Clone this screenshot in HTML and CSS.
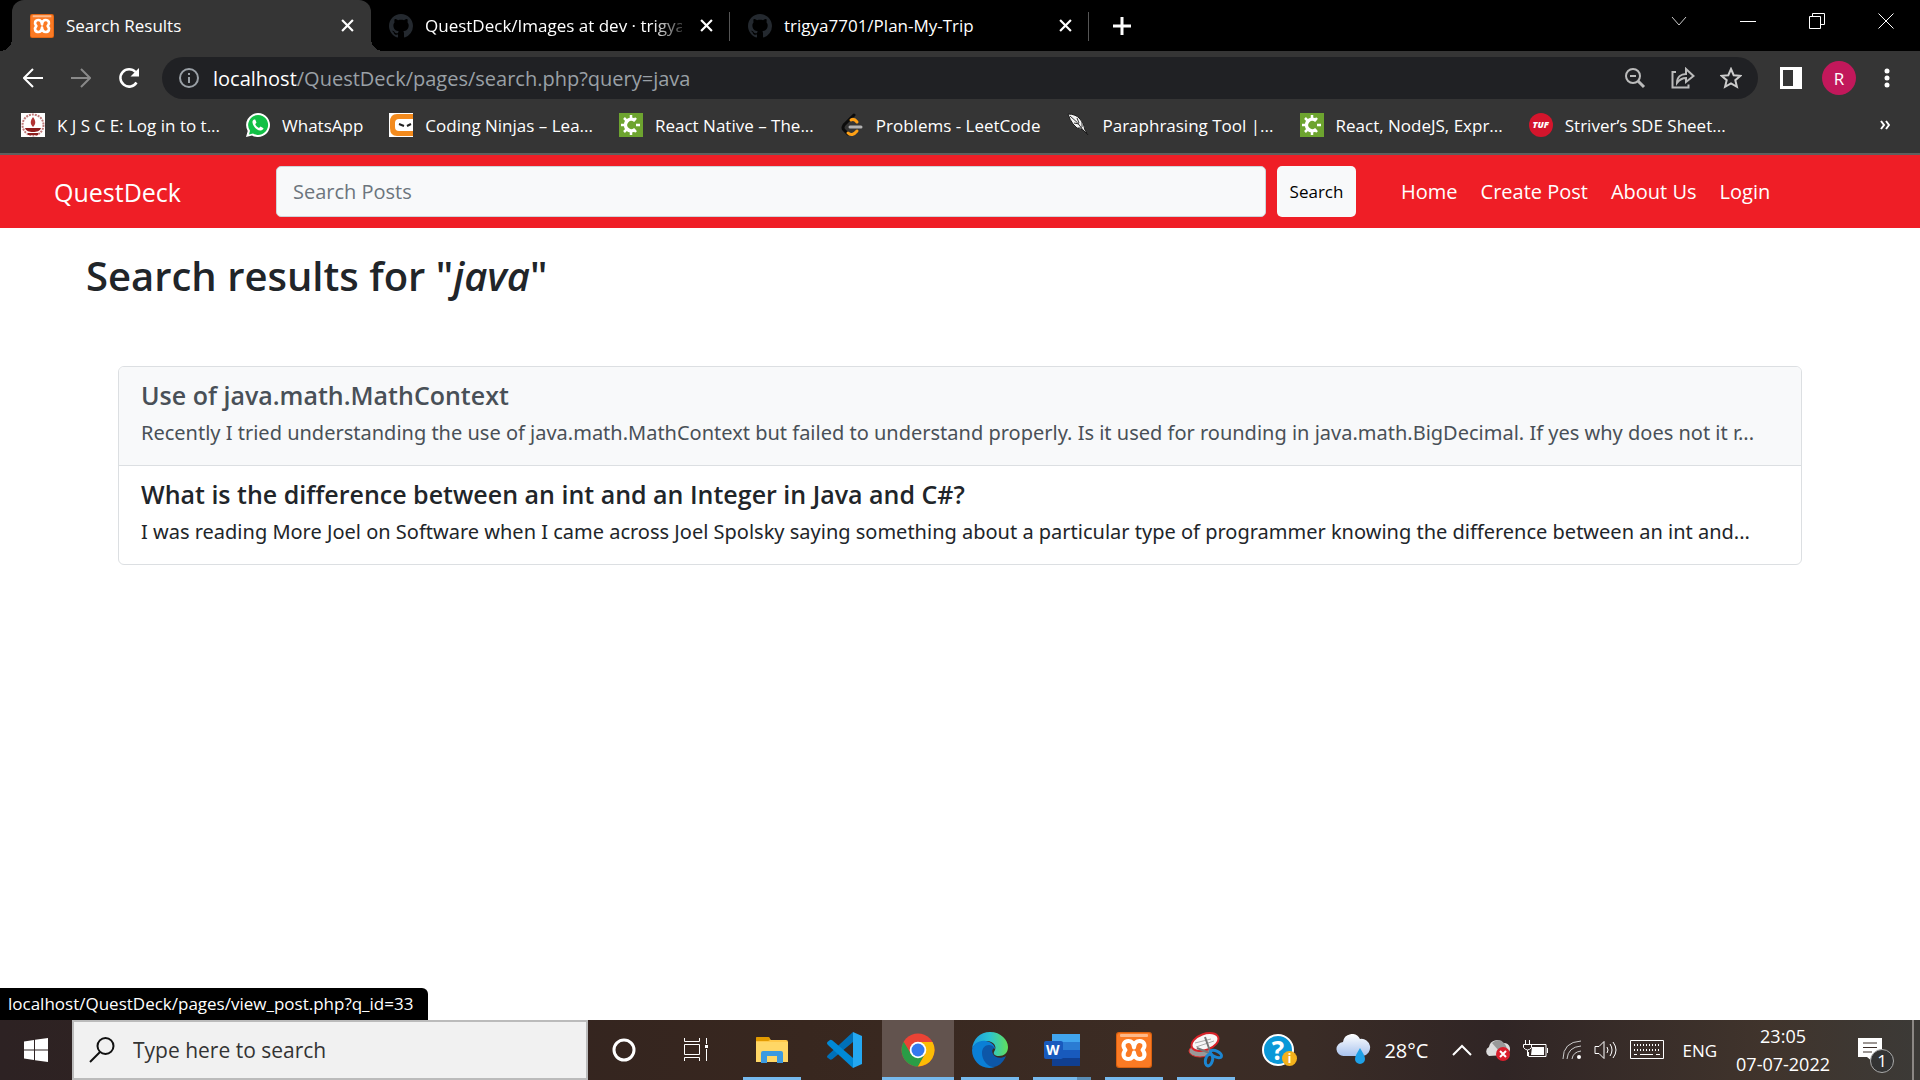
FILE: index.html
```html
<!DOCTYPE html>
<html lang="en">
<head>
<meta charset="utf-8">
<title>Search Results</title>
<link rel="stylesheet" href="styles.css">
</head>
<body>
<svg class="sprite" aria-hidden="true">
  <symbol id="xampp" viewBox="0 0 36 36">
    <rect width="36" height="36" rx="3" fill="#d9600f"/>
    <rect x="1" y="1" width="34" height="34" rx="3" fill="#fb7a24"/>
    <rect x="4" y="2" width="28" height="3" rx="1" fill="#fdb98a"/>
    <path d="M18 15.500C17.500 11 16 9 12.500 9C8 9 5.500 13.500 9.500 18C5.500 22.500 8 27 12.500 27C16 27 17.500 25 18 20.500C18.500 25 20 27 23.500 27C28 27 30.500 22.500 26.500 18C30.500 13.500 28 9 23.500 9C20 9 18.500 11 18 15.500z" fill="none" stroke="#fff" stroke-width="4" stroke-linejoin="round"/>
  </symbol>
  <symbol id="github" viewBox="0 0 16 16">
    <path fill="#24292f" d="M8 0C3.580 0 0 3.580 0 8c0 3.540 2.290 6.530 5.470 7.590.4.070.55-.17.55-.38 0-.19-.01-.82-.01-1.490-2.010.37-2.530-.49-2.690-.94-.09-.23-.48-.94-.82-1.130-.28-.15-.68-.52-.01-.53.63-.01 1.080.58 1.230.82.72 1.210 1.870.87 2.330.66.07-.52.28-.87.51-1.070-1.780-.2-3.640-.89-3.640-3.950 0-.87.31-1.590.82-2.150-.08-.2-.36-1.020.08-2.120 0 0 .67-.21 2.200.82.64-.18 1.320-.27 2-.27s1.360.09 2 .27c1.530-1.040 2.200-.82 2.200-.82.44 1.100.16 1.920.08 2.120.51.56.82 1.270.82 2.150 0 3.070-1.870 3.750-3.650 3.950.29.25.54.73.54 1.480 0 1.070-.01 1.930-.01 2.200 0 .21.15.46.55.38A8.010 8.010 0 0 0 16 8c0-4.420-3.580-8-8-8z"/>
  </symbol>
  <symbol id="gear-c" viewBox="0 0 24 24">
    <rect width="24" height="24" fill="#6da42f"/>
    <path d="M16 7.500A5.800 5.800 0 1 0 16 16.500" fill="none" stroke="#fff" stroke-width="3.500"/>
    <path d="M12 2v4M12 18v4M2 12h4M5 5l3 3M5 19l3-3M17 5l-2.500 3M17 19l-2.500-3M17 12h4" stroke="#fff" stroke-width="2.500"/>
  </symbol>
  <symbol id="close" viewBox="0 0 12 12">
    <path d="M1 1l10 10M11 1L1 11" stroke="#fff" stroke-width="2"/>
  </symbol>
</svg>

<header class="browser">
  <div class="tab-strip">
    <div class="tab tab-active">
      <svg class="favicon"><use href="#xampp"/></svg>
      <span class="tab-title">Search Results</span>
      <button class="tab-close" aria-label="Close tab"><svg width="13" height="13"><use href="#close"/></svg></button>
    </div>
    <div class="tab">
      <svg class="favicon"><use href="#github"/></svg>
      <span class="tab-title tab-fade">QuestDeck/Images at dev · trigya</span>
      <button class="tab-close" aria-label="Close tab"><svg width="13" height="13"><use href="#close"/></svg></button>
    </div>
    <div class="tab">
      <svg class="favicon"><use href="#github"/></svg>
      <span class="tab-title">trigya7701/Plan-My-Trip</span>
      <button class="tab-close" aria-label="Close tab"><svg width="13" height="13"><use href="#close"/></svg></button>
    </div>
    <button class="new-tab" aria-label="New tab"><svg width="18" height="18"><path d="M9 0v18M0 9h18" stroke="#fff" stroke-width="3"/></svg></button>
    <div class="window-buttons">
      <button aria-label="Search tabs"><svg width="16" height="10"><path d="M1 1l7 8l7-8" fill="none" stroke="#ccc"/></svg></button>
      <button aria-label="Minimize"><svg width="16" height="16"><path d="M0 8.500h16" stroke="#fff"/></svg></button>
      <button aria-label="Restore"><svg width="16" height="16"><path d="M.5 3.500h11v12h-11zM3.500 3.500v-3h12v11h-4" fill="none" stroke="#fff"/></svg></button>
      <button aria-label="Close"><svg width="16" height="16"><path d="M.5.5l15 15M15.500.5l-15 15" stroke="#fff"/></svg></button>
    </div>
  </div>

  <div class="toolbar">
    <button class="tool" aria-label="Back"><svg width="20" height="20"><path d="M20 10H2M10 1l-9 9l9 9" fill="none" stroke="#fff" stroke-width="2"/></svg></button>
    <button class="tool" aria-label="Forward"><svg width="20" height="20"><path d="M0 10h18M10 1l9 9l-9 9" fill="none" stroke="#898989" stroke-width="2"/></svg></button>
    <button class="tool" aria-label="Reload"><svg width="22" height="22"><path d="M18.500 15.500A8.700 8.700 0 1 1 17.500 5" fill="none" stroke="#fff" stroke-width="2.500"/><path d="M21 1v8.500h-8.500z" fill="#fff"/></svg></button>
    <div class="omnibox">
      <svg width="22" height="22"><circle cx="11" cy="11" r="9" fill="none" stroke="#9aa0a6" stroke-width="2"/><path d="M11 10v6M11 6v2" stroke="#9aa0a6" stroke-width="2"/></svg>
      <span class="url"><b>localhost</b>/QuestDeck/pages/search.php?query=java</span>
      <button class="tool" aria-label="Zoom"><svg width="22" height="22"><circle cx="9" cy="9" r="7" fill="none" stroke="#bbb" stroke-width="2"/><path d="M14 14l6 6" stroke="#bbb" stroke-width="3"/><path d="M6 9h6" stroke="#bbb" stroke-width="2"/></svg></button>
      <button class="tool" aria-label="Share"><svg width="24" height="22"><path d="M5 5H1.500v15.500h16v-3" fill="none" stroke="#bbb" stroke-width="2"/><path d="M6 16c0-6 4-9 9-9V2l7.500 7l-7.500 6v-4c-4 0-6 1-9 5z" fill="none" stroke="#bbb" stroke-width="2"/></svg></button>
      <button class="tool" aria-label="Bookmark"><svg width="22" height="22"><path d="M11 2l2.700 6.200l6.800.6l-5.200 4.400l1.600 6.600L11 16.300l-5.900 3.500l1.600-6.600L1.500 8.800l6.800-.6z" fill="none" stroke="#ccc" stroke-width="2"/></svg></button>
    </div>
    <div class="toolbar-end">
      <button class="tool" aria-label="Side panel"><svg width="22" height="22"><path d="M1.500 1.500h19v19h-19z" fill="none" stroke="#fff" stroke-width="3"/><path d="M13 0h9v22h-9z" fill="#fff"/></svg></button>
      <button class="avatar">R</button>
      <button class="tool" aria-label="Menu"><svg width="6" height="20" fill="#fff"><circle cx="3" cy="3" r="2.500"/><circle cx="3" cy="10" r="2.500"/><circle cx="3" cy="17" r="2.500"/></svg></button>
    </div>
  </div>

  <nav class="bookmarks" aria-label="Bookmarks">
    <a href="#"><svg viewBox="0 0 24 24"><path fill="#fff" d="M0 0h24v24H0z"/><circle cx="12" cy="12" r="10.500" fill="none" stroke="#c07b7b" stroke-width="2" stroke-dasharray="2 1"/><path d="M4 15h16c-1 3-4 4-8 4s-7-1-8-4z" fill="#8c1c1c"/><path d="M12 4c3 4 3 7 0 10c-3-3-3-6 0-10z" fill="#b23434"/><path d="M7 21h10" stroke="#8c1c1c" stroke-width="2"/></svg><span>K J S C E: Log in to t...</span></a>
    <a href="#"><svg viewBox="0 0 24 24"><path d="M12 0a12 12 0 1 1-6 22.400L0 24l1.700-6A12 12 0 0 1 12 0z" fill="#fff"/><path d="M12 2a10 10 0 1 1-5 18.600L3 21.500l1-3.800A10 10 0 0 1 12 2z" fill="#12c046"/><path d="M8 6.500c-1 .5-1.700 1.700-1.500 3C7 13.500 10.500 17 14.500 17.500c1.400.1 2.700-.8 3-2.200l-3-1.700l-1.500 1.500c-1.700-.8-3-2-3.800-3.800L10.500 9.500L9.200 6.500z" fill="#fff"/></svg><span>WhatsApp</span></a>
    <a href="#"><svg viewBox="0 0 24 24"><path fill="#fff" d="M0 0h24v24H0z"/><path d="M24 1H8Q1 1 1 9v6q0 8 7 8h16v-5H10Q6 18 6 14V10Q6 6 10 6h14z" fill="#f28a1d"/><path d="M10 11l5 2M22 11l-4 2" stroke="#222" stroke-width="2"/></svg><span>Coding Ninjas – Lea...</span></a>
    <a href="#"><svg><use href="#gear-c"/></svg><span>React Native – The...</span></a>
    <a href="#"><svg viewBox="0 0 24 24" fill="none" stroke-linecap="round" stroke-width="3"><path d="M14 2L4 12q-2 3 0 5l4 4" stroke="#0b0b0b"/><path d="M11 7q3-2 6 2M8 20q4 4 9-2" stroke="#ffa116"/><path d="M10 14h11" stroke="#b3b3b3"/></svg><span>Problems - LeetCode</span></a>
    <a href="#"><svg viewBox="0 0 24 24"><path d="M2 1q8 0 12 5q4 4 5 11l3 5l-5-5q-7-1-10-6q-3-4-5-10z" fill="#f4f4f4" stroke="#1c1c1c"/><path d="M4 3q8 6 13 14M8 10l5 1M11 5l2 5M12 15l4 0M16 9v5" stroke="#333" fill="none"/></svg><span>Paraphrasing Tool |...</span></a>
    <a href="#"><svg><use href="#gear-c"/></svg><span>React, NodeJS, Expr...</span></a>
    <a href="#"><span class="tuf">TUF</span><span>Striver’s SDE Sheet...</span></a>
    <button class="more" aria-label="More bookmarks"><svg width="10" height="10"><path d="M1 1l3 4l-3 4M6 1l3 4l-3 4" fill="none" stroke="#fff" stroke-width="2"/></svg></button>
  </nav>
</header>

<div class="page">
  <nav class="site-nav">
    <a class="brand" href="#">QuestDeck</a>
    <form class="site-search">
      <input type="search" placeholder="Search Posts" aria-label="Search Posts">
      <button type="button">Search</button>
    </form>
    <div class="site-links">
      <a href="#">Home</a><a href="#">Create Post</a><a href="#">About Us</a><a href="#">Login</a>
    </div>
  </nav>
  <main>
    <h1>Search results for "<em>java</em>"</h1>
    <div class="results">
      <a class="result result-hover" href="#">
        <h2>Use of java.math.MathContext</h2>
        <p>Recently I tried understanding the use of java.math.MathContext but failed to understand properly. Is it used for rounding in java.math.BigDecimal. If yes why does not it r...</p>
      </a>
      <a class="result" href="#">
        <h2>What is the difference between an int and an Integer in Java and C#?</h2>
        <p>I was reading More Joel on Software when I came across Joel Spolsky saying something about a particular type of programmer knowing the difference between an int and...</p>
      </a>
    </div>
  </main>
  <div class="status">localhost/QuestDeck/pages/view_post.php?q_id=33</div>
</div>

<footer class="taskbar">
  <button class="start" aria-label="Start"><svg width="24" height="24" fill="#fff"><path d="M0 3.500l10-1.500v9.500H0zM11 1.800L24 0v11.500H11zM0 12.500h10V22L0 20.500zM11 12.500h13V24l-13-1.800z"/></svg></button>
  <label class="task-search">
    <svg width="26" height="26"><circle cx="16.500" cy="9" r="8" fill="none" stroke="#111" stroke-width="2"/><path d="M11 15L1 25" stroke="#111" stroke-width="2"/></svg>
    <input type="text" placeholder="Type here to search">
  </label>
  <div class="task-apps">
    <button aria-label="Cortana"><svg width="24" height="24"><circle cx="12" cy="12" r="10" fill="none" stroke="#fff" stroke-width="3"/></svg></button>
    <button aria-label="Task view"><svg width="24" height="24" fill="none" stroke="#fff"><path d="M.5 6.500h15v10H.5zM.5 0v3.500h15V0M.5 23v-3.500h15V23M22.500 0v6M22.500 11v12"/><path d="M21 7h3v3h-3z" fill="#fff" stroke="none"/></svg></button>
    <button class="running spaced" aria-label="File Explorer"><svg width="32" height="28"><path d="M0 3q0-2 2-2h10l3 3h15q2 0 2 2v19H0z" fill="#ffc94a"/><path d="M0 2q0-1 1-1h11q2 0 2 2t-2 2H0z" fill="#e29a00"/><path d="M0 6h32v20H0z" fill="#ffd766"/><path d="M5 27V17q0-2 2-2h18q2 0 2 2v10h-6v-7H11v7z" fill="#3b9ae1"/></svg></button>
    <button aria-label="Visual Studio Code"><svg width="36" height="36"><path d="M27 0L2 23q-2 2 0 3l2 1.500q1 .5 2.500-.5L27 10z" fill="#0070b8"/><path d="M27 36L2 13q-2-2 0-3.500L4 8q1-.5 2.500.5L27 26z" fill="#0089d6"/><path d="M27 0l9 4v28l-9 4z" fill="#24a8f2"/></svg></button>
    <button class="running current" aria-label="Google Chrome"><svg width="34" height="34" viewBox="0 0 34 34"><circle cx="17" cy="17" r="16.500" fill="#ea4335"/><path d="M2.700 8.800A16.500 16.500 0 0 0 17 33.500L24 21L10 21z" fill="#2a9d46"/><path d="M17 9h14.500A16.500 16.500 0 0 1 17 33.500L24 21z" fill="#fbbc05"/><circle cx="17" cy="17" r="8.300" fill="#fff"/><circle cx="17" cy="17" r="6.500" fill="#3478ee"/></svg></button>
    <button class="running" aria-label="Microsoft Edge"><svg width="36" height="36" viewBox="0 0 36 36"><defs><linearGradient id="edge-top"><stop stop-color="#1a9be0"/><stop offset=".5" stop-color="#2cc3d0"/><stop offset="1" stop-color="#62e05a"/></linearGradient></defs><path d="M0 17C1 7 8 0 18 0c11 0 18 8 18 15c0 6-4 9-9 9c-4 0-6-2-5-4c4-6-1-11-7-11C8 9 2 12 0 17z" fill="url(#edge-top)"/><path d="M0 18C1 12 7 8 14 9c6 1 9 5 9 8c-5-5-12-1-11 6c1 6 6 11 11 12C11 39 0 30 0 18z" fill="#0a7fd6"/><path d="M10 21c0-5 3-8 7-8q4 0 5 3q-3 2-1 6c2 4 8 5 13 2c-3 7-8 11-13 11C15 34 10 28 10 21z" fill="#0d57a8"/></svg></button>
    <button class="running grouped" aria-label="Word"><span class="word"><svg width="36" height="32"><path d="M8 0h28v8H8z" fill="#41a5ee"/><path d="M8 8h28v8H8z" fill="#2b7cd3"/><path d="M8 16h28v8H8z" fill="#185abd"/><path d="M8 24h28v8H8z" fill="#103f91"/><rect y="7" width="19" height="18" rx="2" fill="#185abd"/></svg><b>W</b></span></button>
    <button class="running" aria-label="XAMPP"><svg width="36" height="36"><use href="#xampp"/></svg></button>
    <button class="running" aria-label="Snipping Tool"><svg width="36" height="36"><ellipse cx="12" cy="19" rx="11" ry="6" fill="#999" stroke="#d33"/><ellipse cx="17" cy="10" rx="14" ry="8" transform="rotate(-20 17 10)" fill="#f7f7f7" stroke="#d8232a" stroke-width="2"/><path d="M7 11l16-4M8 15l18-6" stroke="#aaa"/><path d="M17 5l6 17M9 16l15 6" stroke="#777" stroke-width="2"/><g fill="none" stroke="#1c86d1" stroke-width="3"><ellipse cx="28" cy="22" rx="6" ry="3" transform="rotate(25 28 22)"/><ellipse cx="21" cy="28" rx="3.500" ry="6" transform="rotate(15 21 28)"/></g></svg></button>
    <button aria-label="Help"><span class="help"><b>?</b><i>i</i></span></button>
  </div>
  <button class="weather"><svg width="36" height="32"><defs><linearGradient id="cloud" x2="0" y2="1"><stop stop-color="#fff"/><stop offset="1" stop-color="#a9c3ee"/></linearGradient></defs><path d="M8 22a7 7 0 0 1-1-14A9 9 0 0 1 24 5a8.500 8.500 0 0 1 3 17z" fill="url(#cloud)"/><path d="M24 14c3 5 5 8 5 11a5 5 0 0 1-10 0c0-3 2-6 5-11z" fill="#1ea1e8"/></svg>28°C</button>
  <div class="tray">
    <button aria-label="Show hidden icons"><svg width="20" height="12"><path d="M1 11l9-9l9 9" fill="none" stroke="#fff" stroke-width="2"/></svg></button>
    <button aria-label="OneDrive"><svg width="26" height="22"><path d="M4 17a5 5 0 0 1 0-9A8 8 0 0 1 18 4a6 6 0 0 1 2 12z" fill="#ddd"/><path d="M7 4Q14-2 19 4q3 3 3 8H14z" fill="#999"/><circle cx="18" cy="15" r="7" fill="#d91f2d"/><path d="M15 12l6 6M21 12l-6 6" stroke="#fff" stroke-width="2"/></svg></button>
    <button aria-label="Battery"><svg width="26" height="20" fill="none" stroke="#fff"><path d="M7 4.500h16v12H5.500V12M24.500 8v5M2.500 0v4M6.500 0v4M.5 4.500h8v3q-4 5-8 0zM4.500 10v6"/><path d="M9 7h12v8H8z" fill="#fff" stroke="none"/></svg></button>
    <button aria-label="Network"><svg width="20" height="20" fill="none" stroke="#ccc" stroke-width="1"><path d="M1 19Q1 2 19 1M5 19Q6 7 19 6M10 19Q11 12 19 11"/><circle cx="17" cy="17" r="2" fill="#fff" stroke="none"/></svg></button>
    <button aria-label="Volume"><svg width="24" height="20" fill="none" stroke="#fff"><path d="M1 6.500h4l5-5v17l-5-5H1zM13 7q2 3 0 6M16 4q4 6 0 12M19 2q6 8 0 16"/></svg></button>
    <button aria-label="Touch keyboard"><svg width="34" height="20" fill="none" stroke="#fff"><path d="M.5.5h33v18H.5z"/><path d="M4 5h26M4 10h26" stroke-width="2" stroke-dasharray="1 2"/><path d="M4 14.500h3M10 14.500h13M26 14.500h4"/></svg></button>
  </div>
  <button class="lang">ENG</button>
  <button class="clock"><span>23:05</span><span>07-07-2022</span></button>
  <button class="notify" aria-label="Notifications"><svg width="24" height="24"><path d="M0 0h24v19h-9v5l-6-5H0z" fill="#fff"/><path d="M5 5h14M5 9.500h14M5 14h9" stroke="#3b2e29"/></svg><span class="badge">1</span></button>
  <button class="desktop" aria-label="Show desktop"></button>
</footer>
</body>
</html>
```
FILE: styles.css
```css
* { box-sizing: border-box; }

body {
  margin: 0;
  min-height: 100vh;
  display: flex;
  flex-direction: column;
  font-family: "Open Sans", "Noto Sans", sans-serif;
  background: #fff;
  color: #212529;
}

button, input { font: inherit; color: inherit; border: 0; padding: 0; background: none; }
a { color: inherit; text-decoration: none; }
svg { display: block; flex: none; }
.sprite { position: absolute; width: 0; height: 0; }

/* Browser frame */
.browser { background: #353535; color: #fff; border-bottom: 2px solid #5f5f5f; }

.tab-strip { display: flex; background: #000; height: 51px; padding-left: 12px; font-size: 17px; }
.tab { position: relative; flex: 0 1 359px; min-width: 0; display: flex; align-items: center; gap: 12px; padding: 0 12px 0 18px; }
.tab:not(.tab-active)::after { content: ""; position: absolute; right: 0; top: 12px; height: 29px; width: 1px; background: #555; }
.tab-active { background: #353535; border-radius: 12px 12px 0 0; }
.tab-active::before, .tab-active::after { content: ""; position: absolute; bottom: 0; width: 12px; height: 12px; }
.tab-active::before { left: -12px; background: radial-gradient(circle at 0 0, transparent 12px, #353535 12px); }
.tab-active::after { right: -12px; background: radial-gradient(circle at 100% 0, transparent 12px, #353535 12px); }
.favicon { width: 24px; height: 24px; }
.tab-title { flex: 1; min-width: 0; white-space: nowrap; }
.tab-fade { mask-image: linear-gradient(to right, #000 88%, transparent 104%); }
.tab-close, .new-tab { display: grid; place-items: center; width: 24px; }
.new-tab { width: 66px; }
.window-buttons { display: flex; margin-left: auto; height: 42px; }
.window-buttons button { width: 69px; display: grid; place-items: center; }

.toolbar { display: flex; align-items: center; padding: 6px 9px 0 9px; }
.tool { width: 48px; height: 42px; display: grid; place-items: center; }
.omnibox { flex: 1; min-width: 0; display: flex; align-items: center; height: 42px; margin-left: 9px; padding: 0 3px 0 16px; border-radius: 21px; background: #202124; }
.url { flex: 1; margin-left: 13px; font-size: 20px; color: #9aa0a6; }
.url b { font-weight: 400; color: #fff; }
.toolbar-end { display: flex; align-items: center; padding-left: 9px; }
.avatar { width: 34px; height: 34px; margin: 0 7px; border-radius: 50%; background: #c2185b; font-size: 17px; }

.bookmarks { display: flex; align-items: center; gap: 26px; height: 54px; padding: 0 30px 2px 21px; font-size: 17px; white-space: nowrap; }
.bookmarks a { display: flex; align-items: center; gap: 12px; }
.bookmarks a svg { width: 24px; height: 24px; }
.tuf { width: 24px; height: 24px; border-radius: 50%; background: #d4152c; font-size: 9px; line-height: 24px; font-weight: 800; font-style: italic; text-align: center; }
.more { margin-left: auto; }

/* Site */
.page { position: relative; flex: 1; }
.site-nav { display: flex; align-items: center; padding: 11px 54px; background: #ef1e26; color: #fff; font-size: 20px; }
.brand { width: 222px; font-size: 25px; line-height: 34px; }
.site-search { flex: 1; display: flex; gap: 11px; }
.site-search input { flex: 1; min-width: 0; height: 51px; padding: 0 16px; border: 1px solid #ced4da; border-radius: 5px; background: #f8f9fa; color: #212529; }
.site-search input::placeholder { color: #6c757d; opacity: 1; }
.site-search button { width: 79px; border-radius: 5px; background: #f8f9fa; color: #000; font-size: 17px; }
.site-links { display: flex; gap: 23px; width: 465px; margin-left: 45px; }

main { padding: 22px 118px; }
h1 { margin: 0 0 64px -32px; font-size: 40px; line-height: 52px; font-weight: 600; }
.results { border: 1px solid #dcdfe2; border-radius: 6px; overflow: hidden; }
.result { display: block; padding: 11px 22px; }
.result + .result { border-top: 1px solid #dcdfe2; }
.result-hover { background: #f8f9fa; color: #495057; }
.result h2 { margin: 0; font-size: 25px; line-height: 34px; font-weight: 600; }
.result p { margin: 0; font-family: "Noto Sans", "Open Sans", sans-serif; font-size: 20px; line-height: 42px; white-space: nowrap; overflow: hidden; text-overflow: ellipsis; }

.status { position: absolute; left: 0; bottom: 0; padding: 0 15px 0 8px; border-radius: 0 6px 0 0; background: #000; color: #fff; font-size: 17px; line-height: 32px; }

/* Taskbar */
.taskbar { display: flex; height: 60px; color: #fff; background: linear-gradient(90deg, #2d2223 0, #33241f 25%, #38271f 42%, #3c2c24 60%, #3a2c26 68%, #302525 78%, #40342c 92%, #3c3a37 100%); }
.start { width: 72px; display: grid; place-items: center; }
.task-search { flex: 0 1 516px; min-width: 0; display: flex; align-items: center; gap: 18px; padding: 0 15px; border: 2px solid #bbb; background: #f1f1f1; color: #333; font-size: 21px; }
.task-search input { flex: 1; min-width: 0; }
.task-search input::placeholder { color: #333; opacity: 1; }
.task-apps { display: flex; }
.task-apps button { position: relative; width: 72px; display: grid; place-items: center; }
.task-apps .spaced { margin-left: 4px; }
.running::after { content: ""; position: absolute; left: 7px; right: 7px; bottom: 0; height: 3px; background: #76b9ed; }
.task-apps .current { margin-left: 2px; background: #62534e; }
.current::after { left: 0; right: 0; }
.grouped::after { background: linear-gradient(90deg, #76b9ed 44px, #5a8db5 44px); }
.word { position: relative; }
.word b { position: absolute; left: 2px; top: 6px; font-size: 14px; line-height: 20px; }
.help { position: relative; width: 32px; height: 32px; border: 2px solid #fff; border-radius: 50%; background: #0a98d8; font-size: 26px; line-height: 28px; }
.help i { position: absolute; right: -5px; bottom: -2px; width: 15px; height: 15px; border-radius: 50%; background: #f2b11c; font-size: 12px; line-height: 15px; font-style: normal; font-weight: 700; }
.weather { display: flex; align-items: center; gap: 12px; margin-left: auto; font-size: 20px; }
.tray { display: flex; align-items: center; justify-content: space-between; width: 212px; margin-left: 24px; }
.lang { margin-left: 18px; font-size: 17px; }
.clock { display: flex; flex-direction: column; justify-content: center; align-items: center; margin-left: 19px; font-size: 18px; line-height: 28px; }
.notify { position: relative; display: grid; align-items: center; width: 40px; margin-left: 28px; }
.badge { position: absolute; left: 12px; top: 29px; width: 24px; height: 24px; border: 1px solid #aaa; border-radius: 50%; background: #333; font-size: 17px; line-height: 22px; }
.desktop { width: 8px; margin-left: 14px; border-left: 2px solid #8b8784; }
```
